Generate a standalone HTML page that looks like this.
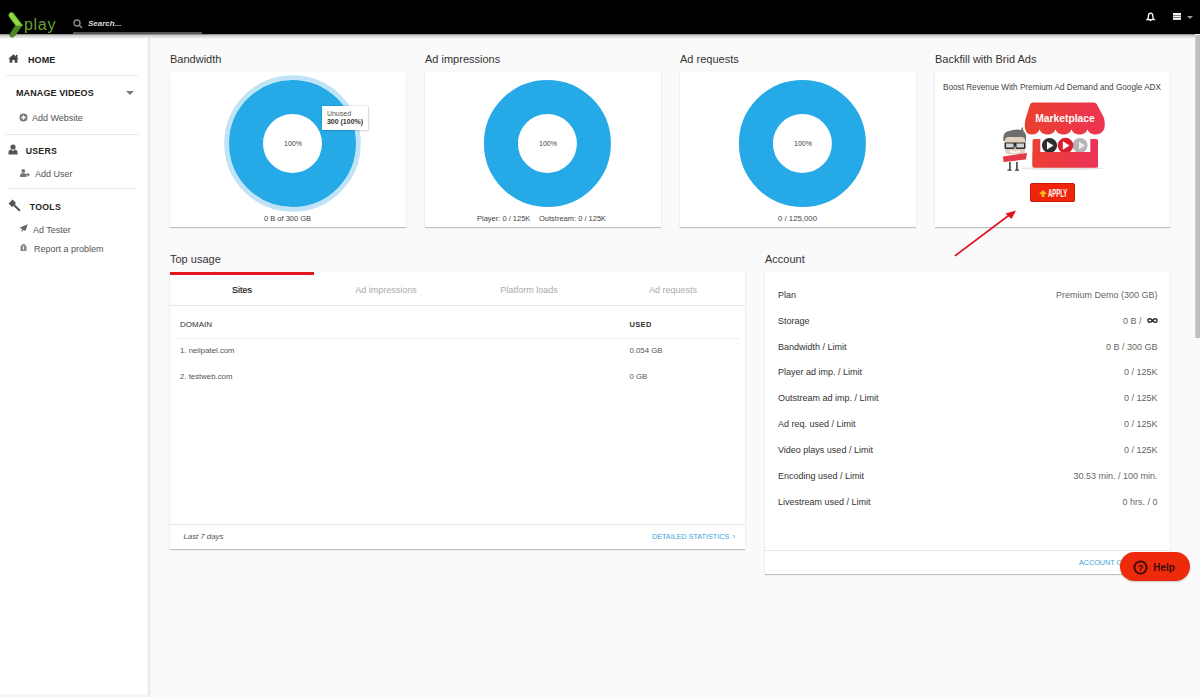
<!DOCTYPE html>
<html><head><meta charset="utf-8">
<style>
*{box-sizing:border-box;margin:0;padding:0}
html,body{width:1200px;height:697px;overflow:hidden;background:#fafafa;font-family:"Liberation Sans",sans-serif;color:#333}
.a{position:absolute;white-space:nowrap}
#hdr{position:absolute;left:0;top:0;width:1200px;height:34px;background:#000}
#hshadow{position:absolute;left:0;top:34px;width:1195px;height:4.5px;background:linear-gradient(#707070 0,#c8c8c8 25%,#d8d8d8 45%,#e6e6e6 70%,rgba(240,240,240,0) 100%)}
#side{position:absolute;left:0;top:34px;width:147px;height:664px;background:#fff}
#sideline{position:absolute;left:147.5px;top:34px;width:3.5px;height:664px;background:linear-gradient(90deg,#e9e9e9 0,#e6e6e6 45%,#f5f5f5 60%,#f5f5f5 100%)}
.sep{position:absolute;height:1px;background:#e9e9e9}
.nav{font-size:9px;font-weight:bold;color:#222;letter-spacing:0.1px}
.sub{font-size:9px;color:#555;margin-top:0.5px}
.card{position:absolute;background:#fff;box-shadow:0 1px 1px rgba(0,0,0,.22),0 0 1px rgba(0,0,0,.08)}
.ttl{font-size:11px;color:#333;margin-top:1.6px}
.lbl{font-size:7.5px;color:#444;margin-top:1px}
.tab{position:absolute;top:285px;font-size:9px;color:#aaa;text-align:center;width:144px}
.row{font-size:9px;color:#333}
.val{font-size:9px;color:#666;text-align:right}
#scroll{position:absolute;left:1195.3px;top:35px;width:4.7px;height:303px;background:linear-gradient(90deg,#d8d8d8,#c0c0c0 30%,#bdbdbd)}
</style></head><body>
<div id="hdr"></div>
<!-- search -->
<svg class="a" style="left:73px;top:19px" width="10" height="10" viewBox="0 0 10 10"><circle cx="4" cy="4" r="3" fill="none" stroke="#888" stroke-width="1.4"/><path d="M6.2 6.2 L9 9" stroke="#888" stroke-width="1.6"/></svg>
<div class="a" style="left:88px;top:18.5px;font-size:8px;font-style:italic;font-weight:bold;color:#ddd">Search...</div>
<div class="a" style="left:73px;top:32px;width:129px;height:1.5px;background:#555"></div>
<!-- header right -->
<svg class="a" style="left:1146.2px;top:11.8px" width="10" height="10" viewBox="0 0 10 10"><path d="M4.6 1 C2.6 1 2.3 2.8 2.3 4.5 L2.3 6.3 L1.1 7.5 L8.1 7.5 L6.9 6.3 L6.9 4.5 C6.9 2.8 6.6 1 4.6 1 Z" fill="none" stroke="#fff" stroke-width="1.25"/><circle cx="4.6" cy="8.3" r="0.9" fill="#fff"/></svg>
<div class="a" style="left:1173px;top:13.3px;width:8.3px;height:1.8px;background:#f4f4f4;box-shadow:0 2.45px 0 #f4f4f4,0 4.9px 0 #f4f4f4"></div>
<div class="a" style="left:1186.8px;top:16px;width:0;height:0;border-left:3.5px solid transparent;border-right:3.5px solid transparent;border-top:3.5px solid #999"></div>

<div id="side"></div>
<div id="sideline"></div>
<div class="a" style="left:0;top:694px;width:148px;height:3px;background:#f6f6f6"></div>
<div id="hshadow"></div>
<!-- sidebar content -->
<svg class="a" style="left:8px;top:54px" width="11" height="9" viewBox="0 0 11 9"><path d="M5.5 0.3 L0.3 4.8 L1.6 4.8 L1.6 8.8 L4.3 8.8 L4.3 6 L6.7 6 L6.7 8.8 L9.4 8.8 L9.4 4.8 L10.7 4.8 Z" fill="#444"/><rect x="8" y="0.8" width="1.5" height="2.5" fill="#444"/></svg>
<div class="a nav" style="left:28px;top:54.5px">HOME</div>
<div class="sep" style="left:6px;top:75px;width:132px"></div>
<div class="a nav" style="left:16px;top:88px">MANAGE VIDEOS</div>
<div class="a" style="left:126px;top:91px;width:0;height:0;border-left:4px solid transparent;border-right:4px solid transparent;border-top:4px solid #777"></div>
<svg class="a" style="left:19px;top:113px" width="9" height="9" viewBox="0 0 9 9"><circle cx="4.5" cy="4.5" r="4" fill="#777"/><path d="M4.5 2.2 V6.8 M2.2 4.5 H6.8" stroke="#fff" stroke-width="1.3"/></svg>
<div class="a sub" style="left:32px;top:112px">Add Website</div>
<div class="sep" style="left:6px;top:134px;width:132px"></div>
<svg class="a" style="left:8px;top:144px" width="10" height="11" viewBox="0 0 10 11"><circle cx="5" cy="3" r="2.6" fill="#555"/><path d="M0.5 10.5 L0.5 8 C0.5 6.5 2 5.8 3 5.6 L5 7 L7 5.6 C8 5.8 9.5 6.5 9.5 8 L9.5 10.5 Z" fill="#555"/></svg>
<div class="a nav" style="left:25.8px;top:146.3px;letter-spacing:0.25px;font-size:8.7px">USERS</div>
<svg class="a" style="left:19.5px;top:169px" width="10" height="8" viewBox="0 0 10 8"><circle cx="3.3" cy="2" r="1.9" fill="#777"/><path d="M0 8 L0 6.3 C0 4.8 1.4 4.3 3.3 4.3 C5.2 4.3 6.6 4.8 6.6 6.3 L6.6 8 Z" fill="#777"/><path d="M6.3 5.6 H9.8 M8.05 3.9 V7.3" stroke="#777" stroke-width="1.2"/></svg>
<div class="a sub" style="left:35px;top:168px">Add User</div>
<div class="sep" style="left:7px;top:188px;width:129px"></div>
<svg class="a" style="left:8px;top:199px" width="13" height="13" viewBox="0 0 13 13"><path d="M0.6 4.6 L4.6 0.6 L8 4 L4 8 Z" fill="#555"/><path d="M5.5 5.5 L11.3 11.3" stroke="#555" stroke-width="2" stroke-linecap="round"/></svg>
<div class="a nav" style="left:29.8px;top:201.5px;letter-spacing:0.3px;font-size:8.7px">TOOLS</div>
<svg class="a" style="left:19px;top:224px" width="9" height="9" viewBox="0 0 9 9"><path d="M8.7 0.3 L0.5 3.8 L3.2 5 L2.3 8.5 L4.5 6 L6.5 7 Z" fill="#666"/></svg>
<div class="a sub" style="left:33px;top:224px">Ad Tester</div>
<svg class="a" style="left:20px;top:244px" width="7" height="7" viewBox="0 0 7 7"><rect x="0.5" y="1.5" width="6" height="5.5" fill="#888"/><rect x="2" y="0" width="3" height="1.5" fill="#888"/><rect x="3" y="2.5" width="1" height="3" fill="#fff"/></svg>
<div class="a sub" style="left:34px;top:243px">Report a problem</div>
<!-- main -->
<div class="a ttl" style="left:170px;top:51px">Bandwidth</div>
<div class="a ttl" style="left:425px;top:51px">Ad impressions</div>
<div class="a ttl" style="left:680px;top:51px">Ad requests</div>
<div class="a ttl" style="left:935px;top:51px">Backfill with Brid Ads</div>

<div class="card" style="left:170px;top:72px;width:236px;height:155px"></div>
<div class="card" style="left:425px;top:72px;width:236px;height:155px"></div>
<div class="card" style="left:680px;top:72px;width:236px;height:155px"></div>
<div class="card" style="left:935px;top:72px;width:235.2px;height:155px"></div>

<svg class="a" style="left:170px;top:72px" width="236" height="155">
  <circle cx="122.5" cy="71.5" r="66" fill="none" stroke="#c0e3f6" stroke-width="4.6"/>
  <circle cx="122.5" cy="71.5" r="46.5" fill="none" stroke="#25a9e7" stroke-width="34"/>
</svg>
<svg class="a" style="left:425px;top:72px" width="236" height="155">
  <circle cx="122.4" cy="71.5" r="46.5" fill="none" stroke="#25a9e7" stroke-width="34"/>
</svg>
<svg class="a" style="left:680px;top:72px" width="236" height="155">
  <circle cx="122.4" cy="71.5" r="46.5" fill="none" stroke="#25a9e7" stroke-width="34"/>
</svg>
<div class="a lbl" style="left:284px;top:139px;font-size:7px">100%</div>
<div class="a lbl" style="left:539px;top:139px;font-size:7px">100%</div>
<div class="a lbl" style="left:794px;top:139px;font-size:7px">100%</div>
<!-- tooltip -->
<div class="a" style="left:322px;top:106.3px;width:46px;height:24px;background:#fff;box-shadow:0 0 1.5px rgba(0,0,0,.28),1px 1px 2px rgba(0,0,0,.1)"></div>
<div class="a" style="left:326.9px;top:109.5px;font-size:7px;color:#555">Unused</div>
<div class="a" style="left:326.9px;top:118.2px;font-size:7px;color:#333;font-weight:bold">300 (100%)</div>

<div class="a lbl" style="left:264px;top:213px">0 B of 300 GB</div>
<div class="a lbl" style="left:477px;top:213px">Player: 0 / 125K</div>
<div class="a lbl" style="left:539px;top:213px">Outstream: 0 / 125K</div>
<div class="a lbl" style="left:778px;top:212.8px;font-size:7.8px">0 / 125,000</div>
<!-- backfill -->
<div class="a" style="left:943px;top:83px;font-size:8.2px;color:#444">Boost Revenue With Premium Ad Demand and Google ADX</div>
<svg class="a" style="left:995px;top:100px" width="115" height="75" viewBox="995 100 115 75">
  <defs>
    <linearGradient id="aw" x1="0" y1="0" x2="1" y2="0"><stop offset="0" stop-color="#e9402c"/><stop offset="1" stop-color="#ee3454"/></linearGradient>
    <linearGradient id="bd" x1="0" y1="0" x2="1" y2="0"><stop offset="0" stop-color="#ec3f33"/><stop offset="1" stop-color="#ec3358"/></linearGradient>
  </defs>
  <ellipse cx="1062" cy="168.5" rx="42" ry="1.5" fill="#e6e6e6"/>
  <!-- stall body -->
  <rect x="1032.5" y="139" width="65.5" height="28.5" rx="2" fill="url(#bd)"/>
  <rect x="1040.3" y="136" width="50" height="16" fill="#fff"/>
  <!-- play circles -->
  <circle cx="1049.5" cy="145.5" r="7.6" fill="#2e2e2e"/>
  <circle cx="1080" cy="145.5" r="7.6" fill="#b5b5b5"/>
  <circle cx="1065.5" cy="145.5" r="7.8" fill="#d71e2b"/>
  <path d="M1047 141.5 L1053.5 145.5 L1047 149.5 Z" fill="#fff"/>
  <path d="M1062.8 141.3 L1069.5 145.5 L1062.8 149.7 Z" fill="#fff"/>
  <path d="M1079 141.5 L1085 145.5 L1079 149.5 Z" fill="#eee"/>
  <rect x="1032.5" y="152" width="65.5" height="15.5" rx="1.5" fill="url(#bd)"/>
  <!-- awning -->
  <path d="M1033 102.5 L1093.5 102.5 Q1096 102.5 1097 104.5 L1104 118 Q1106 128 1103 131 Q1100 134.5 1095.5 134.5 Q1089.5 134.5 1087.5 129.5 Q1085.5 134.5 1079.5 134.5 Q1073.5 134.5 1071.5 129.5 Q1069.5 134.5 1063.5 134.5 Q1057.5 134.5 1055.5 129.5 Q1053.5 134.5 1047.5 134.5 Q1041.5 134.5 1039.5 129.5 Q1037.5 134.5 1032 134.5 Q1027 134.5 1025.5 130 Q1024 126 1025.5 119 L1030 104.5 Q1031 102.5 1033 102.5 Z" fill="url(#aw)"/>
  <text x="1065" y="122.3" font-family="Liberation Sans" font-weight="bold" font-size="10.3" fill="#fff" text-anchor="middle">Marketplace</text>
  <!-- man -->
  <path d="M1003.5 141 Q1002 132 1009 131 Q1016 128.5 1021 130 L1022.5 126.5 L1023.5 131 Q1027.5 134 1025.5 142 Z" fill="#6e6e6e"/>
  <rect x="1005" y="137" width="20" height="17" rx="3.5" fill="#e3d2bf"/>
  <path d="M1004.5 142.5 H1025.5 V147.5 Q1025.5 149 1024 149 H1017 Q1015.5 149 1015.5 147.5 L1015 145 L1014.5 147.5 Q1014.5 149 1013 149 H1006 Q1004.5 149 1004.5 147.5 Z" fill="#2d2d2d"/>
  <rect x="1006" y="143.5" width="7.5" height="4" fill="#cfd6d8"/>
  <rect x="1016.5" y="143.5" width="7.5" height="4" fill="#cfd6d8"/>
  <path d="M1010 151 Q1015 153.5 1020 151" stroke="#fff" stroke-width="1.5" fill="none"/>
  <path d="M1003 156.5 L1027 153 L1026 159.5 L1003.5 162 Z" fill="#e5394a"/>
  <rect x="1009" y="162" width="1.8" height="8" fill="#555"/>
  <rect x="1016" y="162" width="1.8" height="8" fill="#555"/>
  <rect x="1007.5" y="169.5" width="4" height="1.3" fill="#444"/>
  <rect x="1015" y="169.5" width="4" height="1.3" fill="#444"/>
</svg>
<div class="a" style="left:1029.7px;top:183px;width:45.6px;height:19.2px;background:#f0240b;border:1px solid #c9170b;border-radius:2px"></div>
<svg class="a" style="left:1038.8px;top:189.8px" width="8" height="7.5" viewBox="0 0 8 7.5"><path d="M4 0 L8 4 L5.4 4 L5.4 7.5 L2.6 7.5 L2.6 4 L0 4 Z" fill="#f7bd1c"/></svg>
<div class="a" style="left:1048.2px;top:186.6px;font-size:10.6px;font-weight:bold;color:#fff;transform:scaleX(0.56);transform-origin:0 0;letter-spacing:0px">APPLY</div>
<!-- red arrow -->
<svg class="a" style="left:950px;top:205px" width="75" height="55" viewBox="950 205 75 55">
  <path d="M955.5 255.5 L1010 214.5" stroke="#e2121c" stroke-width="1.6" stroke-linecap="round"/>
  <path d="M1016 210.5 L1005.5 213.5 L1011.5 219 Z" fill="#e2121c"/>
</svg>
<!-- top usage -->
<div class="a ttl" style="left:170px;top:251px">Top usage</div>
<div class="card" style="left:170px;top:272px;width:575px;height:277px"></div>
<div class="a" style="left:170px;top:272px;width:144px;height:3px;background:#e0171f"></div>
<div class="a" style="left:170px;top:305px;width:575px;height:1px;background:#e4e4e4"></div>
<div class="tab" style="left:170px;color:#111;-webkit-text-stroke:0.15px #111">Sites</div>
<div class="tab" style="left:314px">Ad impressions</div>
<div class="tab" style="left:457px">Platform loads</div>
<div class="tab" style="left:601px">Ad requests</div>
<div class="a" style="left:180px;top:320px;font-size:8px;color:#333">DOMAIN</div>
<div class="a" style="left:629.5px;top:320px;font-size:7.5px;color:#333;font-weight:bold;letter-spacing:0.35px">USED</div>
<div class="a" style="left:176px;top:338px;width:564px;height:1px;background:#f0f0f0"></div>
<div class="a" style="left:180px;top:346px;font-size:7.8px;color:#555">1. neilpatel.com</div>
<div class="a" style="left:629.5px;top:346px;font-size:7.8px;color:#555">0.054 GB</div>
<div class="a" style="left:180px;top:372px;font-size:7.8px;color:#555">2. testweb.com</div>
<div class="a" style="left:629.5px;top:372px;font-size:7.8px;color:#555">0 GB</div>
<div class="a" style="left:170px;top:524px;width:575px;height:1px;background:#e6e6e6"></div>
<div class="a" style="left:183.5px;top:531.5px;font-size:8px;font-style:italic;color:#555;letter-spacing:-0.1px">Last 7 days</div>
<div class="a" style="left:651.5px;top:532px;font-size:8px;color:#3ba5d9;transform:scaleX(0.9);transform-origin:0 0">DETAILED STATISTICS</div><div class="a" style="left:732.5px;top:531.5px;font-size:8px;color:#3ba5d9">›</div>

<!-- account -->
<div class="a ttl" style="left:765px;top:251px">Account</div>
<div class="card" style="left:765px;top:272px;width:405.2px;height:302px"></div>
<div class="a row" style="left:778px;top:289.8px">Plan</div>
<div class="a val" style="right:42.5px;top:289.8px">Premium Demo (300 GB)</div>
<div class="a row" style="left:778px;top:315.7px">Storage</div>
<div class="a val" style="right:42.5px;top:315.7px">0 B / &nbsp;<svg width="11" height="7" viewBox="0 0 11 7" style="vertical-align:-0.5px"><path d="M5.5 3.5 C4 1.2 1 1 1 3.5 C1 6 4 5.8 5.5 3.5 C7 1.2 10 1 10 3.5 C10 6 7 5.8 5.5 3.5 Z" fill="none" stroke="#333" stroke-width="1.5"/></svg></div>
<div class="a row" style="left:778px;top:341.6px">Bandwidth / Limit</div>
<div class="a val" style="right:42.5px;top:341.6px">0 B / 300 GB</div>
<div class="a row" style="left:778px;top:367.4px">Player ad imp. / Limit</div>
<div class="a val" style="right:42.5px;top:367.4px">0 / 125K</div>
<div class="a row" style="left:778px;top:393.3px">Outstream ad imp. / Limit</div>
<div class="a val" style="right:42.5px;top:393.3px">0 / 125K</div>
<div class="a row" style="left:778px;top:419.2px">Ad req. used / Limit</div>
<div class="a val" style="right:42.5px;top:419.2px">0 / 125K</div>
<div class="a row" style="left:778px;top:445.1px">Video plays used / Limit</div>
<div class="a val" style="right:42.5px;top:445.1px">0 / 125K</div>
<div class="a row" style="left:778px;top:471.0px">Encoding used / Limit</div>
<div class="a val" style="right:42.5px;top:471.0px">30.53 min. / 100 min.</div>
<div class="a row" style="left:778px;top:496.8px">Livestream used / Limit</div>
<div class="a val" style="right:42.5px;top:496.8px">0 hrs. / 0</div>
<div class="a" style="left:765px;top:550px;width:405.2px;height:1px;background:#e6e6e6"></div>
<div class="a" style="left:1079.3px;top:558px;font-size:8px;color:#3ba5d9;transform:scaleX(0.9);transform-origin:0 0">ACCOUNT CENTER</div>
<!-- help -->
<div class="a" style="left:1120px;top:552.3px;width:69.5px;height:28.5px;border-radius:14.5px;background:#ee2a0c;box-shadow:0 1px 2px rgba(0,0,0,.2)"></div>
<svg class="a" style="left:1132px;top:558.5px" width="17" height="17" viewBox="0 0 17 17"><circle cx="8.5" cy="8.5" r="6.1" fill="none" stroke="#3a0a05" stroke-width="1.9"/><text x="8.5" y="12" font-family="Liberation Sans" font-weight="bold" font-size="9" fill="#3a0a05" text-anchor="middle">?</text></svg>
<div class="a" style="left:1153.3px;top:562px;font-size:10px;font-weight:bold;color:#3a0a05">Help</div>
<!-- logo -->
<svg class="a" style="left:0px;top:0px" width="30" height="42" viewBox="0 0 30 42">
  <path d="M15.8 25.2 L22.2 25.2 L14.6 36 Q13 37.6 11.2 37 Q9 36 9.6 34.6 Z" fill="#4b8526" stroke="#4b8526" stroke-width="0.8" stroke-linejoin="round"/>
  <path d="M9.2 16.6 Q8.2 14.6 9.8 13.2 Q11.8 11.8 13.2 13.2 L22.4 25.4 L15.8 25.4 Z" fill="#87d63c" stroke="#87d63c" stroke-width="0.6" stroke-linejoin="round"/>
  <path d="M10.4 14.2 L18.6 24.6" fill="none" stroke="#aef06a" stroke-width="1" opacity="0.5"/>
</svg>
<div class="a" style="left:24px;top:16px;font-size:16px;color:#67a032;letter-spacing:0.7px;line-height:18px">play</div>
<div id="scroll"></div>
</body></html>
